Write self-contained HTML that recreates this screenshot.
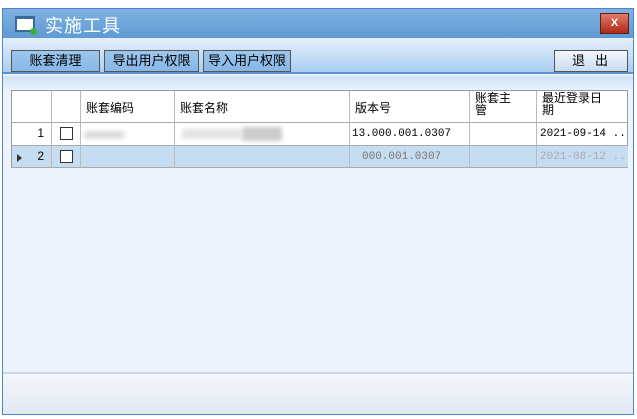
<!DOCTYPE html>
<html><head><meta charset="utf-8"><style>
*{margin:0;padding:0;box-sizing:border-box}
body{width:637px;height:419px;overflow:hidden;background:#fff;position:relative;font-family:"Liberation Sans","Noto Sans CJK SC",sans-serif;font-size:12px;color:#000}
.win{position:absolute;left:2px;top:8px;width:632px;height:407px;border:1px solid #4a86c8;background:#eef4fd}
.title{position:absolute;left:0;top:0;width:630px;height:29px;background:linear-gradient(#7fb2e2,#5f9ad4);}
.title .t{position:absolute;left:42px;top:3px;font-size:18px;color:#fff;letter-spacing:1px}
.icon{position:absolute;left:12px;top:7px;width:20px;height:16px;background:#fff;border:2px solid #3a6a9a;border-top-width:3px}
.icon:after{content:"";position:absolute;right:-4px;bottom:-5px;width:7px;height:7px;border-radius:50%;background:#3cae3a}
.x{position:absolute;left:597px;top:4px;width:29px;height:21px;background:linear-gradient(#e07a6a,#b02818);border:1px solid #5a2010;color:#fff;font-size:11px;text-align:center;line-height:19px;font-weight:bold}
.tb{position:absolute;left:0;top:29px;width:630px;height:36px;background:linear-gradient(#e6f0fb,#a9cdf0);border-bottom:2px solid #5a95d0}
.btn{position:absolute;top:12px;height:22px;border:1px solid #555;background:linear-gradient(#9cc6ee,#88b8e8);font-size:13px;text-align:center;line-height:20px}
.band{position:absolute;left:0;top:67px;width:630px;height:16px;background:linear-gradient(#cfe1f5,#eef4fd)}
.grid{position:absolute;left:8px;top:81px;width:617px;height:78px;border:1px solid #999;background:#fff}
.c{position:absolute;border-right:1px solid #bbb;border-bottom:1px solid #aaa;font-size:12px;overflow:hidden;white-space:nowrap}
.foot{position:absolute;left:0;top:363px;width:630px;height:42px;border-top:2px solid #c9d6e6;background:linear-gradient(#f4f7fb,#e2e9f3)}
.cb{position:absolute;left:8px;top:4px;width:13px;height:13px;border:1px solid #333;background:#fff}
.blur{position:absolute;background:#ddd;filter:blur(2px)}
.m{font-family:'Liberation Mono',monospace;font-size:11px}
</style></head><body>
<div class="win">
 <div class="title"><div class="icon"></div><div class="t">实施工具</div><div class="x">X</div></div>
 <div class="tb">
  <div class="btn" style="left:8px;width:89px">账套清理</div>
  <div class="btn" style="left:101px;width:95px">导出用户权限</div>
  <div class="btn" style="left:200px;width:88px">导入用户权限</div>
  <div class="btn" style="left:551px;width:74px;background:linear-gradient(#f4f8fc,#c8dcf0);letter-spacing:10px;padding-left:8px">退出</div>
 </div>
 <div class="band"></div>
 <div class="grid">
  <div class="c" style="left:0;top:0;width:40px;height:32px"></div>
  <div class="c" style="left:40px;top:0;width:29px;height:32px"></div>
  <div class="c" style="left:69px;top:0;width:94px;height:32px;padding:8px 0 0 5px">账套编码</div>
  <div class="c" style="left:163px;top:0;width:175px;height:32px;padding:8px 0 0 5px">账套名称</div>
  <div class="c" style="left:338px;top:0;width:120px;height:32px;padding:8px 0 0 5px">版本号</div>
  <div class="c" style="left:458px;top:0;width:67px;height:32px;padding:1px 0 0 5px;line-height:12px">账套主<br>管</div>
  <div class="c" style="left:525px;top:0;width:91px;height:32px;padding:1px 0 0 5px;line-height:12px;border-right:0">最近登录日<br>期</div>
  <div class="c" style="left:0;top:32px;width:40px;height:23px;text-align:right;padding:3px 7px 0 0">1</div>
  <div class="c" style="left:40px;top:32px;width:29px;height:23px"><div class="cb"></div></div>
  <div class="c" style="left:69px;top:32px;width:94px;height:23px"></div>
  <div class="c" style="left:163px;top:32px;width:175px;height:23px"></div>
  <div class="c m" style="left:338px;top:32px;width:120px;height:23px;padding:5px 0 0 2px">13.000.001.0307</div>
  <div class="c" style="left:458px;top:32px;width:67px;height:23px"></div>
  <div class="c m" style="left:525px;top:32px;width:91px;height:23px;padding:5px 0 0 3px;border-right:0">2021-09-14 ...</div>
  <div style="position:absolute;left:0;top:55px;width:616px;height:22px;background:#c6dcf1"></div>
  <div class="c" style="left:0;top:55px;width:40px;height:22px;text-align:right;padding:3px 7px 0 0">2</div>
  <div style="position:absolute;left:5px;top:63px;border-left:5px solid #333;border-top:4px solid transparent;border-bottom:4px solid transparent"></div>
  <div class="c" style="left:40px;top:55px;width:29px;height:22px"><div class="cb"></div></div>
  <div class="c" style="left:69px;top:55px;width:94px;height:22px"></div>
  <div class="c" style="left:163px;top:55px;width:175px;height:22px"></div>
  <div class="c m" style="left:338px;top:55px;width:120px;height:22px;padding:5px 0 0 12px;color:#777">000.001.0307</div>
  <div class="c" style="left:458px;top:55px;width:67px;height:22px"></div>
  <div class="c m" style="left:525px;top:55px;width:91px;height:22px;border-right:0;padding:5px 0 0 3px;color:#aab">2021-08-12 ...</div>
  <div class="blur" style="left:72px;top:40px;width:40px;height:8px"></div>
  <div class="blur" style="left:230px;top:36px;width:40px;height:14px;background:#ccc"></div>
  <div class="blur" style="left:170px;top:38px;width:60px;height:10px;background:#e4e4e4"></div>
 </div>
 <div class="foot"></div>
</div>
</body></html>
